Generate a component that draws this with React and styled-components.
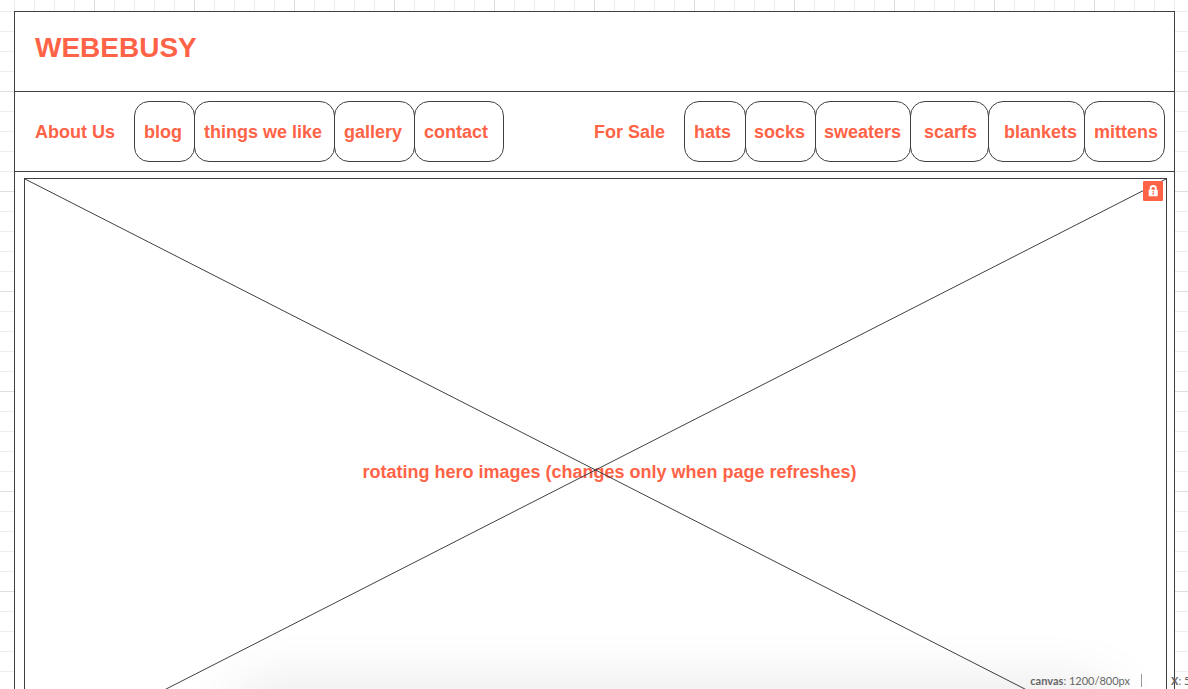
import React from "react";
import styled, { createGlobalStyle } from "styled-components";

const ink = "#404042";
const coral = "#ff6347";

const GlobalStyle = createGlobalStyle`
  *, *::before, *::after { box-sizing: border-box; }
  html, body { margin: 0; background: #fff; }
  body { font-family: "Liberation Sans", Arial, sans-serif; color: ${coral}; }
`;

const Workspace = styled.div`
  position: relative;
  height: 100vh;
  overflow: hidden;
  padding: 11px 13px 0 14px;
  background-color: #fff;
  background-image:
    linear-gradient(to right, #dedede 1px, transparent 1px),
    linear-gradient(to bottom, #dedede 1px, transparent 1px),
    linear-gradient(to right, #ededed 1px, transparent 1px),
    linear-gradient(to bottom, #ededed 1px, transparent 1px);
  background-size: 100px 100px, 100px 100px, 20px 20px, 20px 20px;
  background-position: 94px 0, 0 91px, 14px 0, 0 11px;
`;

const Frame = styled.div`
  border: 1px solid ${ink};
  background: #fff;
`;

const Header = styled.header`
  height: 80px;
  padding: 19px 20px;
  border-bottom: 1px solid ${ink};
`;

const Brand = styled.h1`
  margin: 0;
  font-size: 28px;
  line-height: 34px;
  font-weight: 700;
`;

const Nav = styled.nav`
  display: flex;
  justify-content: space-between;
  height: 80px;
  padding: 9px 9px 9px 20px;
  border-bottom: 1px solid ${ink};
  font-size: 18px;
  font-weight: 700;
  line-height: 22px;
`;

const Group = styled.div`
  display: flex;
  align-items: center;
`;

const GroupTitle = styled.span`
  width: ${(p) => p.$width}px;
  white-space: nowrap;
`;

const Pill = styled.a`
  display: flex;
  align-items: center;
  width: ${(p) => p.$width}px;
  height: 61px;
  padding-left: ${(p) => p.$inset || 9}px;
  border: 1px solid ${ink};
  border-radius: 15px;
  color: inherit;
  text-decoration: none;
  white-space: nowrap;

  & + & { margin-left: -1px; }
`;

const Hero = styled.section`
  position: relative;
  display: flex;
  align-items: center;
  justify-content: center;
  aspect-ratio: 1143 / 584;
  margin: 6px 7px 9px 9px;
  border: 1px solid ${ink};
`;

const Cross = styled.svg`
  position: absolute;
  inset: 0;
  width: 100%;
  height: 100%;
`;

const Caption = styled.p`
  margin: 0;
  padding: 4px 0 0 28px;
  font-size: 18px;
  font-weight: 700;
  line-height: 22px;
`;

const LockButton = styled.button`
  position: absolute;
  top: 2px;
  right: 3px;
  display: flex;
  width: 20px;
  height: 20px;
  padding: 0;
  border: 0;
  border-radius: 1px;
  background: ${coral};
`;

const StatusBar = styled.footer`
  position: absolute;
  left: 0;
  right: 0;
  bottom: 0;
  display: flex;
  justify-content: flex-end;
  height: 16px;
  font-family: Lato, sans-serif;
  font-size: 11px;
  line-height: 16px;
  color: #666;
  white-space: nowrap;

  &::before {
    content: "";
    position: absolute;
    top: 100%;
    left: 240px;
    right: 80px;
    height: 40px;
    box-shadow: 0 0 60px rgba(0, 0, 0, 0.12);
  }
`;

const CanvasSize = styled.span`
  position: relative;
  padding-right: 11px;
`;

const Divider = styled.span`
  position: relative;
  width: 1px;
  height: 13px;
  margin-top: 1px;
  background: #999;
`;

const Position = styled.span`
  position: relative;
  width: 46px;
  padding-left: 29px;
`;

const about = [
  { label: "blog", width: 61 },
  { label: "things we like", width: 141 },
  { label: "gallery", width: 81 },
  { label: "contact", width: 90 },
];

const sale = [
  { label: "hats", width: 62 },
  { label: "socks", width: 71, inset: 8 },
  { label: "sweaters", width: 96, inset: 8 },
  { label: "scarfs", width: 79, inset: 13 },
  { label: "blankets", width: 97, inset: 15 },
  { label: "mittens", width: 81 },
];

function NavGroup({ title, titleWidth, items }) {
  return (
    <Group>
      <GroupTitle $width={titleWidth}>{title}</GroupTitle>
      {items.map((item) => (
        <Pill key={item.label} href="#" $width={item.width} $inset={item.inset}>
          {item.label}
        </Pill>
      ))}
    </Group>
  );
}

export default function App() {
  return (
    <>
      <GlobalStyle />
      <Workspace>
        <Frame>
          <Header>
            <Brand>WEBEBUSY</Brand>
          </Header>
          <Nav>
            <NavGroup title="About Us" titleWidth={99} items={about} />
            <NavGroup title="For Sale" titleWidth={90} items={sale} />
          </Nav>
          <Hero>
            <Caption>rotating hero images (changes only when page refreshes)</Caption>
            <Cross aria-hidden="true">
              <line x1="0" y1="0" x2="100%" y2="100%" stroke={ink} />
              <line x1="100%" y1="0" x2="0" y2="100%" stroke={ink} />
            </Cross>
            <LockButton type="button" aria-label="Lock">
              <svg width="20" height="20" viewBox="0 0 20 20" aria-hidden="true">
                <path d="M7.6 9.5V7.4a2.6 2.4 0 0 1 5.2 0V9.5" fill="none" stroke="#fff" strokeWidth="1.8" />
                <rect x="5.7" y="8.7" width="9" height="6.6" rx="0.5" fill="#fff" />
                <path d="M9.6 10h1.3v1.3H9.6zM9.6 11.8h1.3v1.9H9.6z" fill={coral} />
              </svg>
            </LockButton>
          </Hero>
        </Frame>
        <StatusBar>
          <CanvasSize><b>canvas</b>: 1200/800px</CanvasSize>
          <Divider />
          <Position><b>X</b>: 5</Position>
        </StatusBar>
      </Workspace>
    </>
  );
}
